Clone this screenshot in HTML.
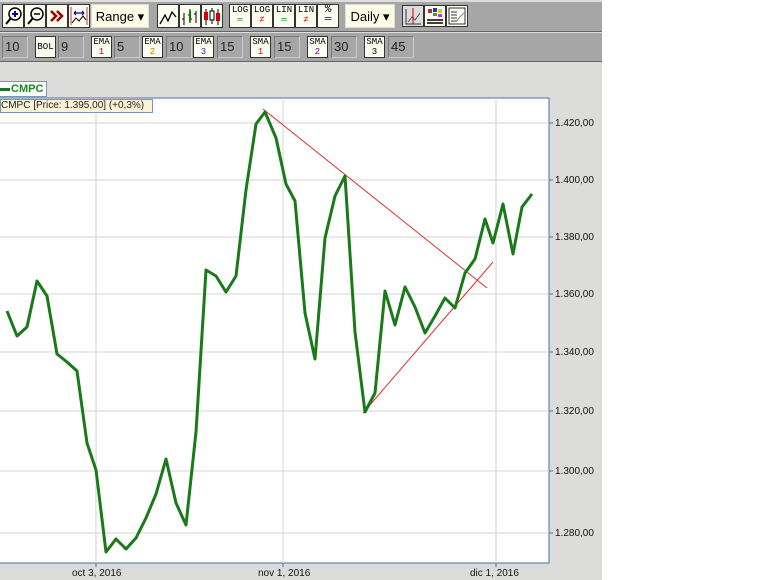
<!DOCTYPE html>
<html><head><style>
body{margin:0;width:760px;height:580px;background:#fff;position:relative;overflow:hidden;font-family:"Liberation Sans",sans-serif}
.tb{position:absolute;left:0;width:602px;background:#a6a6a6}
.btn{position:absolute;background:#fcfcf0;border:1px solid #333;box-sizing:border-box;font-size:9px;text-align:center;line-height:10px;font-family:"Liberation Mono",monospace}
.inp{position:absolute;background:#a6a6a6;border:1px solid #ccc;border-top-color:#777;border-left-color:#777;box-sizing:border-box;font-size:13px;line-height:20px;padding-left:2px;color:#222}
.dd{position:absolute;background:#fbfbe6;border:1px solid #ddd;box-sizing:border-box;font-size:13px;line-height:24px;text-align:center}
.lbl{position:absolute;font-size:10px;color:#111}
</style></head><body>
<div class="tb" style="top:0;height:2px;background:#ddd"></div>
<div class="tb" style="top:2px;height:29px"></div>
<div class="tb" style="top:31px;height:1px;background:#666"></div>
<div class="tb" style="top:32px;height:1px;background:#ddd"></div>
<div class="tb" style="top:33px;height:28px"></div>
<div class="tb" style="top:61px;height:1px;background:#666"></div>
<div class="tb" style="top:62px;height:1px;background:#ddd"></div>
<div style="position:absolute;left:0;top:63px;width:602px;height:517px;background:#dcdddb"></div>

<!-- row1 -->
<div class="btn" style="left:2px;top:4px;width:22px;height:24px"><svg width="20" height="22"><circle cx="12" cy="9" r="6" fill="none" stroke="#000" stroke-width="1.5"/><path d="M8 13L3 19" stroke="#000" stroke-width="2"/><path d="M12 6v6M9 9h6" stroke="#00a" stroke-width="2"/></svg></div>
<div class="btn" style="left:24px;top:4px;width:22px;height:24px"><svg width="20" height="22"><circle cx="12" cy="9" r="6" fill="none" stroke="#000" stroke-width="1.5"/><path d="M8 13L3 19" stroke="#000" stroke-width="2"/><path d="M9 9h6" stroke="#000" stroke-width="1.5"/></svg></div>
<div class="btn" style="left:46px;top:4px;width:22px;height:24px"><svg width="20" height="22"><path d="M4 6l5 5-5 5M10 6l5 5-5 5" fill="none" stroke="#900" stroke-width="2.5"/></svg></div>
<div class="btn" style="left:68px;top:4px;width:22px;height:24px"><svg width="20" height="22"><path d="M2 2v18M18 2v18" stroke="#c33"/><path d="M5 8h10M5 8l2-2M5 8l2 2M15 8l-2-2M15 8l-2 2" stroke="#00a" stroke-width="1.2"/><path d="M3 18l4-5 3 3 4-5 3 4" fill="none" stroke="#000"/></svg></div>
<div class="dd" style="left:91px;top:4px;width:58px;height:24px">Range ▾</div>
<div class="btn" style="left:157px;top:4px;width:22px;height:24px"><svg width="20" height="22"><path d="M2 19l5-9 3 6 4-9 4 5" fill="none" stroke="#000" stroke-width="1.3"/></svg></div>
<div class="btn" style="left:179px;top:4px;width:22px;height:24px"><svg width="20" height="22"><path d="M4 8v12M10 4v14M16 6v12M2 14h2M8 10h2M10 14h2M14 9h2" stroke="#000"/><path d="M10 6v10" stroke="#080" stroke-width="2"/></svg></div>
<div class="btn" style="left:201px;top:4px;width:22px;height:24px"><svg width="20" height="22"><path d="M4 4v16M10 3v16M16 4v16" stroke="#000"/><rect x="2" y="7" width="4" height="8" fill="#c00"/><rect x="8" y="6" width="4" height="9" fill="#fff" stroke="#000"/><rect x="14" y="8" width="4" height="8" fill="#c00"/></svg></div>
<div class="btn" style="left:229px;top:4px;width:22px;height:24px">LOG<br><span style="color:#080">═</span></div>
<div class="btn" style="left:251px;top:4px;width:22px;height:24px">LOG<br><span style="color:#c00">≠</span></div>
<div class="btn" style="left:273px;top:4px;width:22px;height:24px">LIN<br><span style="color:#080">═</span></div>
<div class="btn" style="left:295px;top:4px;width:22px;height:24px">LIN<br><span style="color:#c00">≠</span></div>
<div class="btn" style="left:317px;top:4px;width:22px;height:24px;font-size:11px">%<br><span style="color:#00a">═</span></div>
<div class="dd" style="left:345px;top:4px;width:50px;height:24px">Daily ▾</div>
<div class="btn" style="left:402px;top:5px;width:22px;height:22px;background:#ddd"><svg width="20" height="20"><path d="M3 3v15h15" fill="none" stroke="#333"/><path d="M5 16l4-5 3 3 5-7" fill="none" stroke="#555"/><path d="M10 2v16" stroke="#c00"/></svg></div>
<div class="btn" style="left:424px;top:5px;width:22px;height:22px"><svg width="20" height="20"><rect x="3" y="3" width="4" height="4" fill="#a33"/><rect x="8" y="2" width="4" height="4" fill="#339"/><rect x="13" y="3" width="4" height="4" fill="#cc3"/><rect x="8" y="7" width="4" height="3" fill="#3a3"/><rect x="13" y="8" width="4" height="3" fill="#c3c"/><path d="M2 14h16M2 17h16" stroke="#000" stroke-width="1.5"/></svg></div>
<div class="btn" style="left:446px;top:5px;width:22px;height:22px"><svg width="20" height="20"><rect x="2" y="2" width="16" height="16" fill="none" stroke="#333"/><path d="M4 6h6M4 9h6M4 12h6M4 15h6" stroke="#336"/><path d="M10 15l3-4 4-4" fill="none" stroke="#888"/></svg></div>

<!-- row2 -->
<div class="inp" style="left:2px;top:36px;width:26px;height:22px">10</div>
<div class="btn" style="left:35px;top:36px;width:21px;height:22px;line-height:20px">BOL</div>
<div class="inp" style="left:58px;top:36px;width:26px;height:22px">9</div>
<div class="btn" style="left:91px;top:36px;width:21px;height:22px">EMA<br><span style="color:#c00">1</span></div>
<div class="inp" style="left:114px;top:36px;width:26px;height:22px">5</div>
<div class="btn" style="left:142px;top:36px;width:21px;height:22px">EMA<br><span style="color:#c70">2</span></div>
<div class="inp" style="left:166px;top:36px;width:26px;height:22px">10</div>
<div class="btn" style="left:193px;top:36px;width:21px;height:22px">EMA<br><span style="color:#339">3</span></div>
<div class="inp" style="left:217px;top:36px;width:26px;height:22px">15</div>
<div class="btn" style="left:250px;top:36px;width:21px;height:22px">SMA<br><span style="color:#c00">1</span></div>
<div class="inp" style="left:274px;top:36px;width:26px;height:22px">15</div>
<div class="btn" style="left:307px;top:36px;width:21px;height:22px">SMA<br><span style="color:#808">2</span></div>
<div class="inp" style="left:331px;top:36px;width:26px;height:22px">30</div>
<div class="btn" style="left:364px;top:36px;width:21px;height:22px">SMA<br><span style="color:#000">3</span></div>
<div class="inp" style="left:388px;top:36px;width:26px;height:22px">45</div>

<!-- legend -->
<div style="position:absolute;left:0;top:81px;width:47px;height:16px;background:#fff;border:1px solid #7a95b8;border-left:none;box-sizing:border-box;font-size:11px;font-weight:bold;color:#1a8a1a;line-height:14px"><span style="display:inline-block;width:10px;height:3px;background:#1a7a1a;vertical-align:middle;margin-right:1px"></span>CMPC</div>

<svg style="position:absolute;left:0;top:0" width="602" height="580">
<rect x="-1" y="98" width="550" height="465" fill="#fff" stroke="#4a6ea8"/>
<g stroke="#d4d4d4" stroke-width="1">
<path d="M0 123H549M0 180H549M0 237H549M0 294H549M0 352H549M0 411H549M0 471H549M0 533H549"/>
<path d="M96 98V563M283 98V563M496 98V563"/>
</g>
<g stroke="#4a6ea8"><path d="M549 123h4M549 180h4M549 237h4M549 294h4M549 352h4M549 411h4M549 471h4M549 533h4M96 563v4M283 563v4M496 563v4"/></g>
<path d="M263 109L487 288M363 413L493 262" stroke="#e03030" stroke-width="1"/>
<polyline fill="none" stroke="#1a7a1a" stroke-width="3" stroke-linejoin="round" points="7,311 17,336 27,327 37,281 47,296 57,354 67,362 77,371 87,443 96,470 106,552 116,539 126,549 136,538 146,518 156,494 166,459 176,503 186,525 196,432 206,270 216,276 226,292 236,276 246,190 256,124 265,112 276,138 286,184 295,201 305,313 315,359 325,238 335,196 345,176 355,332 365,412 375,393 385,291 395,325 405,287 415,307 425,333 435,316 445,298 455,308 465,273 475,259 485,219 493,243 503,204 513,254 522,207 532,194"/>
</svg>
<div style="position:absolute;left:0;top:99px;width:153px;height:14px;background:#fbf3d9;border:1px solid #7a95b8;box-sizing:border-box;font-size:10px;line-height:12px;color:#222">CMPC [Price: 1.395,00] (+0,3%)</div>

<div class="lbl" style="left:555px;top:118px">1.420,00</div>
<div class="lbl" style="left:555px;top:175px">1.400,00</div>
<div class="lbl" style="left:555px;top:232px">1.380,00</div>
<div class="lbl" style="left:555px;top:289px">1.360,00</div>
<div class="lbl" style="left:555px;top:347px">1.340,00</div>
<div class="lbl" style="left:555px;top:406px">1.320,00</div>
<div class="lbl" style="left:555px;top:466px">1.300,00</div>
<div class="lbl" style="left:555px;top:528px">1.280,00</div>
<div class="lbl" style="left:72px;top:568px">oct 3, 2016</div>
<div class="lbl" style="left:258px;top:568px">nov 1, 2016</div>
<div class="lbl" style="left:470px;top:568px">dic 1, 2016</div>
</body></html>
